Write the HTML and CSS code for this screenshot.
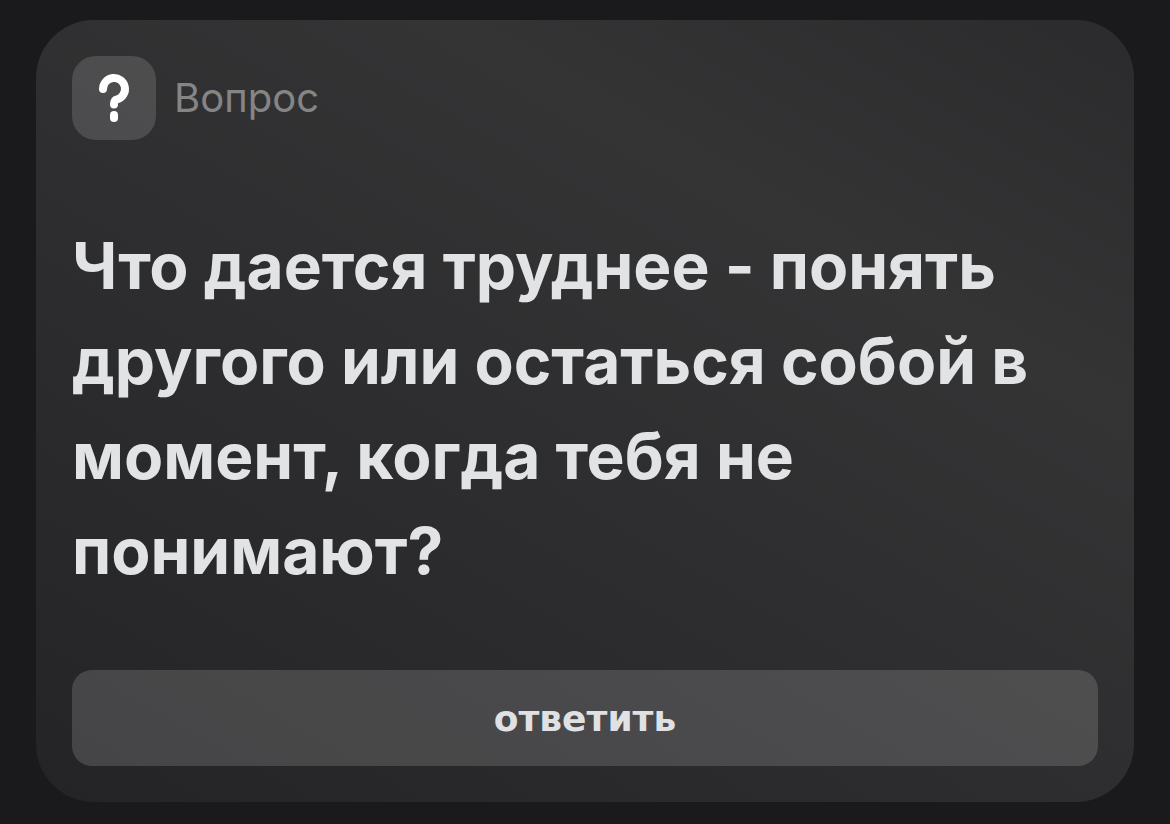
FILE: index.html
```html
<!DOCTYPE html>
<html lang="ru">
<head>
    <meta charset="UTF-8">
    <meta name="viewport" content="width=device-width, initial-scale=1.0">
    <title>Вопрос</title>

    <link rel="stylesheet" href="styles.css">
</head>
<body>

    <main class="card">
        <div class="header">
            <div class="icon">
                <svg width="34" height="52" viewBox="0 0 34 52" fill="none" stroke="white" stroke-width="8" stroke-linecap="round" stroke-linejoin="round" aria-hidden="true">
                    <path d="M6 17A11 11 0 1 1 20 27.500C18 28 17 29 17 32.500"/>
                    <path d="M17 43V46"/>
                </svg>
            </div>
            <span class="label">Вопрос</span>
        </div>

        <h1 class="question">Что дается труднее - понять другого или остаться собой в момент, когда тебя не понимают?</h1>

        <button class="answer" type="button">ответить</button>
    </main>

</body>
</html>
```
FILE: styles.css
```css
* {
    box-sizing: border-box;
}

body {
    margin: 0;
    padding: 20px 36px 22px;
    min-height: 100vh;
    display: flex;
    background-color: #1a1a1c;
    font-family: Inter, "Liberation Sans", sans-serif;
}

.card {
    flex: 1;
    display: flex;
    flex-direction: column;
    padding: 36px;
    border-radius: 58px;
    background: linear-gradient(30deg, #242426, #2f2f31 50%, #343435 72%, #2b2b2d);
}

.header {
    display: flex;
    align-items: center;
    gap: 18px;
}

.icon {
    display: flex;
    align-items: center;
    justify-content: center;
    width: 84px;
    height: 84px;
    border-radius: 24px;
    background-color: rgba(255, 255, 255, 0.14);
}

.label {
    font-size: 40px;
    line-height: 48px;
    color: #858586;
}

.question {
    margin: 78px 0 0;
    font-size: 64px;
    line-height: 95px;
    font-weight: 700;
    color: #e2e3e5;
}

.answer {
    width: 100%;
    height: 96px;
    margin-top: auto;
    border: none;
    border-radius: 20px;
    background-color: rgba(255, 255, 255, 0.15);
    color: #e0e1e4;
    font-family: "DejaVu Sans", sans-serif;
    font-size: 36px;
    font-weight: 700;
    cursor: pointer;
}
```
